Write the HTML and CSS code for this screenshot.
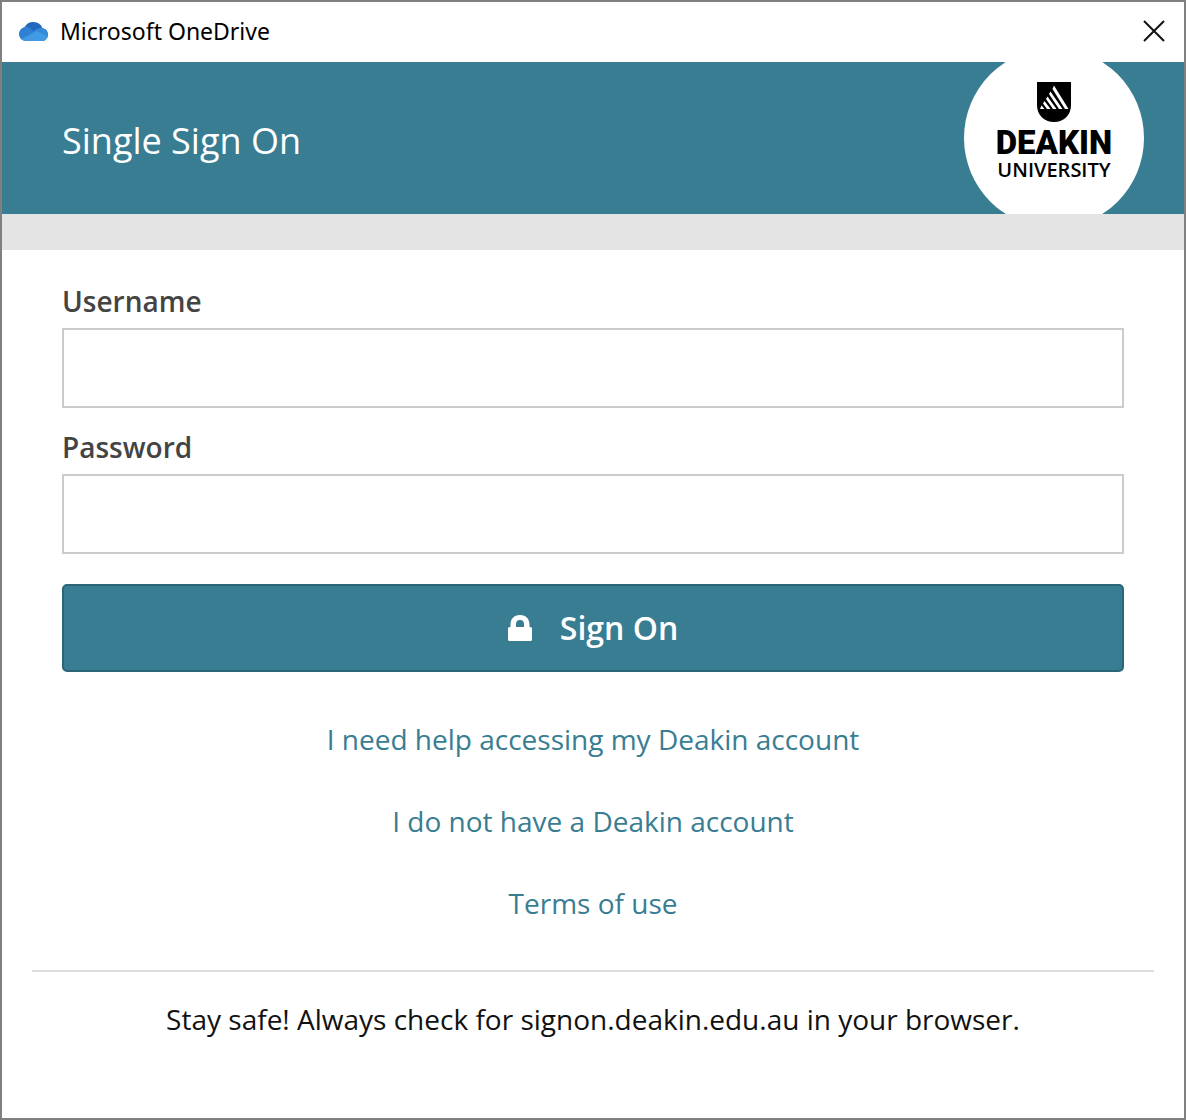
FILE: index.html
```html
<!DOCTYPE html>
<html lang="en">
<head>
<meta charset="utf-8">
<meta name="viewport" content="width=device-width, initial-scale=1">
<title>Microsoft OneDrive</title>
<link rel="stylesheet" href="styles.css">
</head>
<body>
<div class="window">
  <div class="titlebar">
    <svg class="cloud" viewBox="0 0 30 20" aria-hidden="true">
      <defs><clipPath id="cloud-shape"><path d="M7 20a7 7 0 0 1-1.500-13.800A10 10 0 0 1 23.500 7.200 6.500 6.500 0 0 1 23.500 20Z"/></clipPath></defs>
      <g clip-path="url(#cloud-shape)">
        <path fill="#2468bd" d="M0 0h30v20H0z"/>
        <path fill="#2f80d3" d="M0 5Q8 4 13 9L18 12 0 20Z"/>
        <path fill="#338ad9" d="M15 10Q20 5 30 7V20H15Z"/>
        <path fill="#419be4" d="M0 19Q9 15 15 11 19 9 30 17V20H0Z"/>
      </g>
    </svg>
    <span class="title">Microsoft OneDrive</span>
    <button class="close" type="button" aria-label="Close">
      <svg viewBox="0 0 22 22" aria-hidden="true"><path d="M1 1 21 21M21 1 1 21" fill="none" stroke="#111" stroke-width="2"/></svg>
    </button>
  </div>
  <header class="banner">
    <h1>Single Sign On</h1>
    <div class="logo">
      <svg class="shield" viewBox="0 0 34 40" aria-hidden="true">
        <path d="M0 0H34V23C34 33 27 40 17 40S0 33 0 23Z"/>
        <path d="M17 3.500 31.500 27H28L15.500 7ZM13.500 9.500 25.500 27H22L12 12ZM10.500 14.500 19.500 27H16L9 17ZM7.500 19 13.500 27H10L6 21.500ZM4.500 23.500 7.500 27H3Z" fill="#fff"/>
      </svg>
      <span class="logo-name">DEAKIN</span>
      <span class="logo-type">UNIVERSITY</span>
    </div>
  </header>
  <div class="strip"></div>
  <main>
    <form class="signon">
      <label for="username">Username</label>
      <input id="username" name="username" type="text">
      <label for="password">Password</label>
      <input id="password" name="password" type="password">
      <button class="submit" type="submit">
        <svg class="lock" viewBox="0 0 24 26" aria-hidden="true"><path fill="#fff" fill-rule="evenodd" d="M2.500 12V9.500C2.500 4 6 0 12 0S21.500 4 21.500 9.500V12H22.500Q24 12 24 13.500V24.500Q24 26 22.500 26H1.500Q0 26 0 24.500V13.500Q0 12 1.500 12ZM8 12H16V9.500C16 6.500 15 5 12 5S8 6.500 8 9.500Z"/></svg>
        Sign On
      </button>
    </form>
    <nav class="links">
      <a href="#help">I need help accessing my Deakin account</a>
      <a href="#register">I do not have a Deakin account</a>
      <a href="#terms">Terms of use</a>
    </nav>
  </main>
  <footer>Stay safe! Always check for signon.deakin.edu.au in your browser.</footer>
</div>
</body>
</html>
```
FILE: styles.css
```css
* {
  box-sizing: border-box;
}

body {
  margin: 0;
  background: #fff;
  color: #111;
  font-family: "Open Sans", sans-serif;
  font-size: 28px;
  line-height: 40px;
}

.window {
  min-height: 100vh;
  border: 2px solid #808080;
}

.titlebar {
  display: flex;
  align-items: center;
  height: 60px;
  padding: 0 19px 2px 17px;
}

.cloud {
  width: 30px;
  height: 20px;
}

.title {
  margin-left: 11px;
  color: #000;
  font-family: "Noto Sans", sans-serif;
  font-size: 23px;
}

.close {
  display: flex;
  margin-left: auto;
  padding: 0;
  border: 0;
  background: none;
}

.close svg {
  width: 22px;
  height: 22px;
}

.banner {
  display: flex;
  align-items: center;
  justify-content: space-between;
  height: 152px;
  padding: 0 40px 0 60px;
  overflow: hidden;
  background: #387d92;
  color: #fff;
}

h1 {
  margin: 0;
  padding-top: 6px;
  font-size: 36px;
  font-weight: 400;
}

.logo {
  display: flex;
  flex: none;
  flex-direction: column;
  align-items: center;
  width: 180px;
  height: 180px;
  padding-top: 34px;
  border-radius: 50%;
  background: #fff;
  color: #000;
}

.shield {
  width: 34px;
  height: 40px;
}

.logo-name {
  margin-top: 4px;
  font-family: Roboto, sans-serif;
  font-size: 33px;
  font-weight: 900;
  line-height: 34px;
}

.logo-type {
  font-size: 20px;
  font-weight: 600;
  line-height: 20px;
}

.strip {
  height: 36px;
  background: #e4e4e4;
}

.signon {
  display: flex;
  flex-direction: column;
  padding: 31px 60px 0;
}

.signon label {
  margin-bottom: 7px;
  color: #444;
  font-weight: 600;
}

.signon input {
  height: 80px;
  margin-bottom: 19px;
  padding: 0 20px;
  border: 2px solid #ccc;
  border-radius: 0;
  font: inherit;
}

.submit {
  display: flex;
  align-items: center;
  justify-content: center;
  gap: 28px;
  height: 88px;
  margin-top: 11px;
  border: 2px solid #2b6678;
  border-radius: 5px;
  background: #387d92;
  color: #fff;
  font: inherit;
  font-size: 32px;
  font-weight: 600;
}

.lock {
  width: 24px;
  height: 26px;
}

.links {
  display: flex;
  flex-direction: column;
  align-items: center;
  gap: 42px;
  padding: 47px 60px;
}

.links a {
  color: #387d92;
  text-decoration: none;
}

footer {
  margin: 0 30px;
  padding: 27px 0;
  border-top: 2px solid #ddd;
  text-align: center;
}
```
